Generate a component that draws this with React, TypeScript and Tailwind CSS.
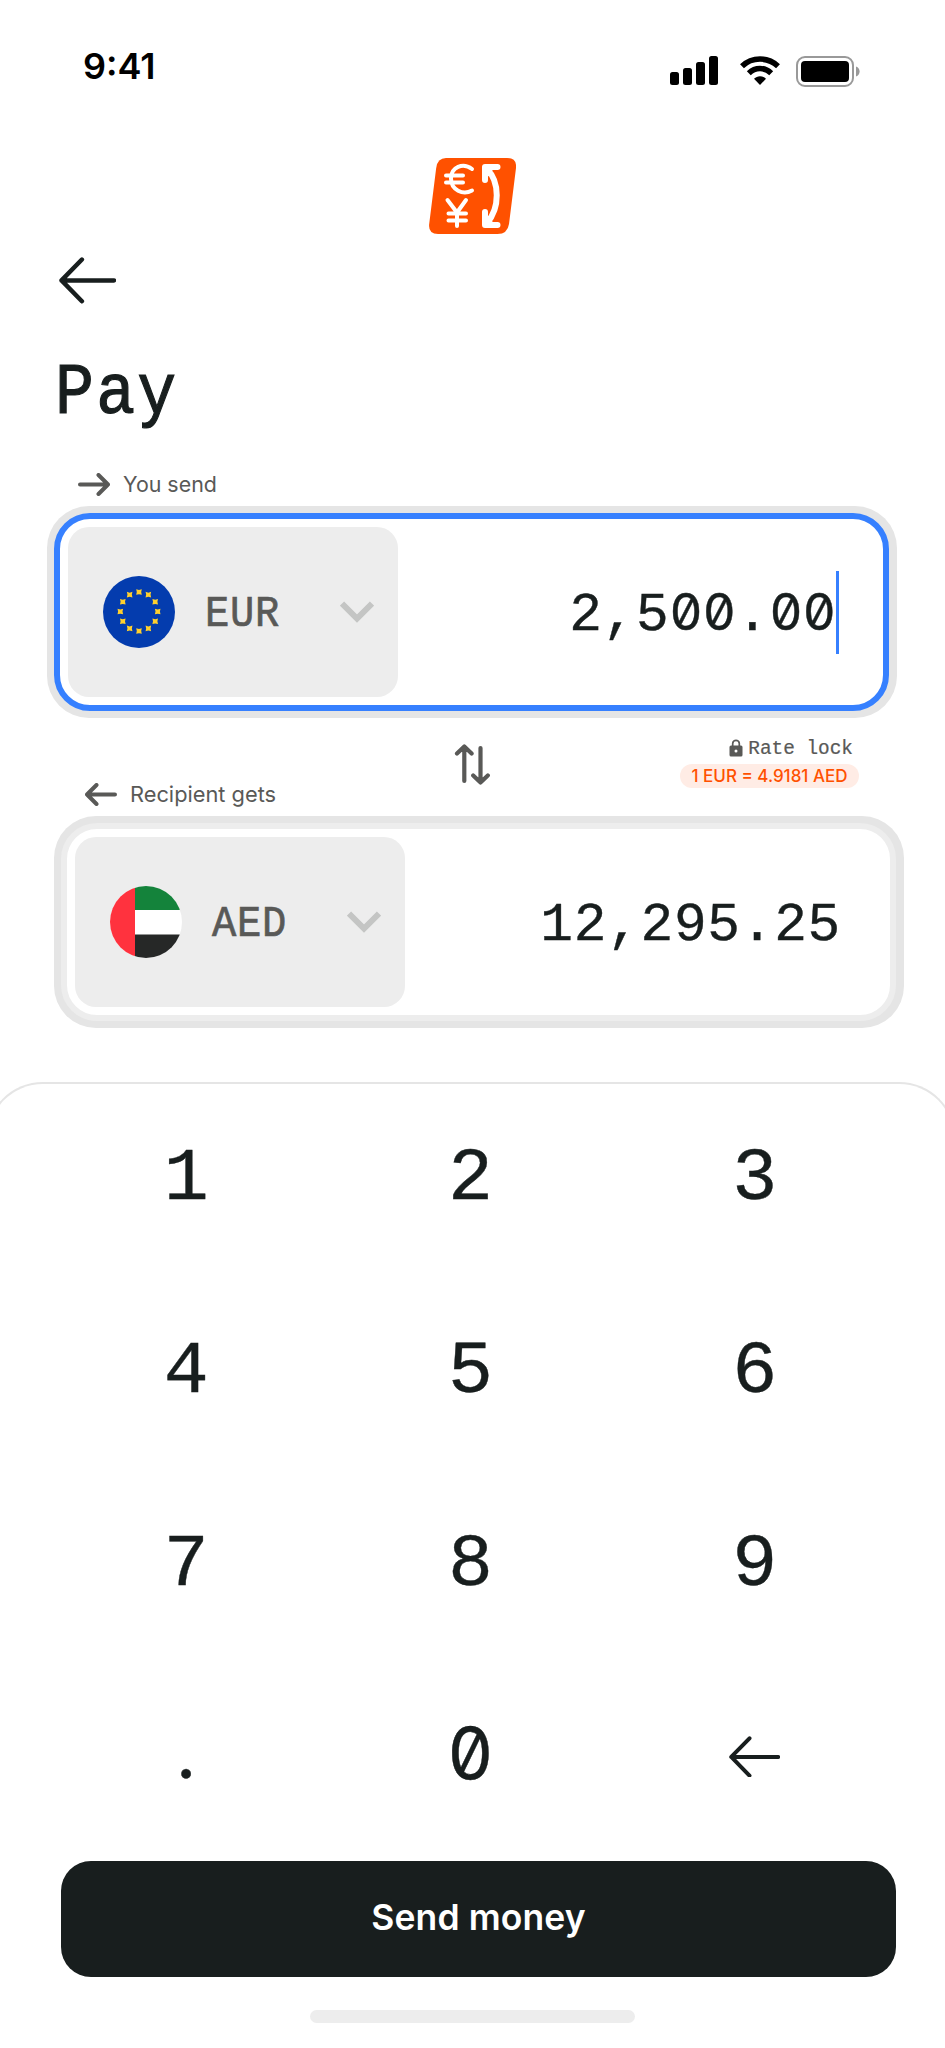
import type { ReactNode } from "react";

const KEYS = ["1", "2", "3", "4", "5", "6", "7", "8", "9", ".", "0", "back"];

function SignalIcon() {
  return (
    <svg width="48" height="29" viewBox="0 0 48 29" fill="#000">
      <rect x="0" y="16" width="9" height="13" rx="2.5" />
      <rect x="13" y="12" width="9" height="17" rx="2.5" />
      <rect x="26" y="6" width="9" height="23" rx="2.5" />
      <rect x="39" y="0" width="9" height="29" rx="2.5" />
    </svg>
  );
}

function WifiIcon() {
  return (
    <svg width="40" height="29" viewBox="0 0 40 29" fill="none" stroke="#000" strokeWidth="5.6">
      <path d="M2 10.2C12 .6 28 .6 38 10.2" />
      <path d="M8.8 17.2C15.2 11 24.8 11 31.2 17.2" />
      <path d="M14 22.8C17.4 19.4 22.6 19.4 26 22.8L20 29Z" fill="#000" stroke="none" />
    </svg>
  );
}

function BatteryIcon() {
  return (
    <svg width="64" height="31" viewBox="0 0 64 31" fill="none">
      <rect x="1" y="1" width="56" height="29" rx="8" stroke="#999" strokeWidth="2" />
      <rect x="5" y="5" width="48" height="21" rx="4" fill="#000" />
      <path d="M60 10.5C64.8 12.2 64.8 18.8 60 20.5Z" fill="#999" />
    </svg>
  );
}

function Logo() {
  return (
    <svg width="87" height="76" viewBox="0 0 87 76" fill="none" stroke="#fff" strokeLinecap="round" strokeLinejoin="round">
      <path d="M17 0H78Q88 0 87 10L80 66Q78.500 76 68.500 76H9Q-1 76 .2 66L7.200 10Q8.500 0 17 0Z" fill="#ff5100" stroke="none" />
      <path d="M43 11C34 4 22 9 22 20.500S34 37.500 43 32.500M17 17.500H34M17 24.500H34" strokeWidth="4" />
      <path d="M18.500 42L28 54.500L37 42M28 54.500V68M19.500 55.500H37M19.500 62.500H37" strokeWidth="4" />
      <path d="M58 11C71 24 71 50 58 65" strokeWidth="6" strokeLinecap="butt" />
      <path d="M56 22V9H68.500M56 54V67H68.500" strokeWidth="6" />
      <path d="M56 9L64 9L60 17L56 18ZM56 67L64 67L60 59L56 58Z" fill="#fff" strokeWidth="2" />
    </svg>
  );
}

function BackArrow({ width }: { width: number }) {
  return (
    <svg width={width} viewBox="0 0 56 46" fill="none" stroke="#181e1e" strokeWidth="4.400" strokeLinecap="round" strokeLinejoin="round">
      <path d="M54 23H2.500M22.500 2.500L2.500 23L22.500 43.500" />
    </svg>
  );
}

function LabelArrow({ flip }: { flip?: boolean }) {
  return (
    <svg width="32" height="23" viewBox="0 0 32 23" fill="none" stroke="#595957" strokeWidth="4" strokeLinecap="round" strokeLinejoin="round" className={flip ? "rotate-180" : ""}>
      <path d="M2 11.500H30M20.500 2L30 11.500L20.500 21" />
    </svg>
  );
}

function SwapIcon() {
  return (
    <svg width="36" height="43" viewBox="0 0 36 43" fill="none" stroke="#595957" strokeWidth="4.200" strokeLinecap="round" strokeLinejoin="round">
      <path d="M10.300 38V3.500M3 10.500L10.300 3.500L17.600 10.500M26.500 5V39.500M19.200 32.500L26.500 39.500L33.800 32.500" />
    </svg>
  );
}

function LockIcon() {
  return (
    <svg width="14" height="18" viewBox="0 0 14 18" fill="none" className="-mt-1">
      <path d="M3.700 8V4.500C3.700 .2 10.300 .2 10.300 4.500V8" stroke="#595957" strokeWidth="1.700" />
      <rect x=".5" y="6.500" width="13" height="11" rx="1.500" fill="#595957" />
      <circle cx="7" cy="12" r="1.500" fill="#fff" />
    </svg>
  );
}

function EuFlag() {
  return (
    <svg width="72" height="72" viewBox="0 0 72 72">
      <circle cx="36" cy="36" r="36" fill="#043cae" />
      {Array.from({ length: 12 }, (_, i) => {
        const a = (i * Math.PI) / 6;
        const x = 36 + 18.7 * Math.sin(a);
        const y = 35.5 - 19.5 * Math.cos(a);
        return (
          <path key={i} transform={`translate(${x} ${y})`} d="M-2.800 -2.800L0 -1.900L2.800 -2.800L2.200 0L2.800 2.800L0 2.200L-2.800 2.800L-2.200 0Z" fill="#ffd02e" />
        );
      })}
    </svg>
  );
}

function UaeFlag() {
  return (
    <svg width="72" height="72" viewBox="0 0 72 72">
      <clipPath id="uae">
        <circle cx="36" cy="36" r="36" />
      </clipPath>
      <g clipPath="url(#uae)">
        <rect width="72" height="72" fill="#fff" />
        <rect x="25" width="47" height="24" fill="#14833b" />
        <rect x="25" y="48.500" width="47" height="24" fill="#262827" />
        <rect width="25" height="72" fill="#ff323e" />
      </g>
    </svg>
  );
}

// Zeros use the slashed glyph, everything else stays monospaced
function Amount({ value }: { value: string }) {
  return (
    <span className="pt-[7px] font-['Liberation_Mono',monospace] text-[54.500px] leading-[84px] tracking-[0.7px] whitespace-nowrap text-[#181e1e] [-webkit-text-stroke:0.4px_#181e1e]">
      {value.split(/(0+)/).map((part, i) =>
        part.startsWith("0") ? (
          <span key={i} className="font-['Inter',sans-serif] text-[51px] leading-none tracking-[0.2px] [font-feature-settings:'zero','tnum']">
            {part}
          </span>
        ) : (
          part
        )
      )}
    </span>
  );
}

function CurrencyPicker({ code, flag }: { code: string; flag: ReactNode }) {
  return (
    <button className="flex h-[170px] w-[330px] shrink-0 items-center rounded-[21px] bg-[#ededed] pr-[24px] pl-[35px]">
      {flag}
      <span className="ml-[30px] origin-left scale-x-90 pt-[5px] font-['Liberation_Mono',monospace] text-[45px] leading-none tracking-[0.8px] text-[#595957] [-webkit-text-stroke:0.7px_#595957]">
        {code}
      </span>
      <svg width="34" height="22" viewBox="0 0 34 22" fill="none" stroke="#c4c5c4" strokeWidth="6" className="ml-auto">
        <path d="M2 2.500L17 17.500L32 2.500" />
      </svg>
    </button>
  );
}

export default function App() {
  return (
    <div className="flex h-[2048px] w-[945px] flex-col overflow-hidden bg-white font-['Inter',sans-serif] text-[#181e1e]">
      <header className="flex h-[158px] items-start justify-between pt-[44px] pr-[85px] pl-[83px]">
        <span className="pt-px text-[36px] leading-[42px] font-semibold text-black">9:41</span>
        <div className="flex items-start pt-3">
          <SignalIcon />
          <span className="ml-[22px]"><WifiIcon /></span>
          <span className="ml-4"><BatteryIcon /></span>
        </div>
      </header>

      <div className="flex h-[76px] justify-center"><Logo /></div>

      <div className="mt-[23px] ml-[59px] h-[46px]"><BackArrow width={57} /></div>

      <h1 className="mt-[46px] ml-[55px] h-[124px] origin-left scale-x-90 font-['Liberation_Mono',monospace] text-[72px] leading-[90px] tracking-[2.500px] [-webkit-text-stroke:1.2px_#181e1e]">
        Pay
      </h1>

      <div className="ml-[78px] flex h-[23px] items-center gap-[13px]">
        <LabelArrow />
        <span className="text-[21.400px] leading-none text-[#595957]">You send</span>
      </div>

      <section className="mt-[10px] ml-[47px] flex h-[212px] w-[850px] rounded-[42px] bg-[#e5e5e5] py-[7px] pr-2 pl-[7px]">
        <div className="flex flex-1 items-center justify-between rounded-[36px] border-6 border-[#3680ff] bg-white pr-[44px] pl-2">
          <CurrencyPicker code="EUR" flag={<EuFlag />} />
          <div className="flex items-center">
            <Amount value="2,500.00" />
            <span className="h-[83px] w-[3px] bg-[#3680ff]" />
          </div>
        </div>
      </section>

      <div className="flex h-[98px] justify-between pr-[86px] pl-[85px]">
        <div className="flex w-[369px] items-center gap-[13px] pt-[55px]">
          <LabelArrow flip />
          <span className="text-[21.800px] leading-none text-[#595957]">Recipient gets</span>
        </div>
        <div className="mt-[25px]"><SwapIcon /></div>
        <div className="ml-auto flex flex-col items-end pt-[17px]">
          <div className="flex h-[24px] items-center gap-[5px] pt-[5px] pr-[6px] text-[#595957]">
            <LockIcon />
            <span className="font-['Liberation_Mono',monospace] text-[19.400px] leading-none [-webkit-text-stroke:0.2px_#595957]">Rate lock</span>
          </div>
          <div className="mt-[5px] flex h-6 w-[179px] items-center justify-center rounded-full bg-[#ffece5] text-[17px] leading-none font-medium text-[#ff5100]">
            1 EUR = 4.9181 AED
          </div>
        </div>
      </div>

      <section className="ml-[54px] flex h-[212px] w-[850px] rounded-[42px] bg-[#e5e5e5] py-[7px] pr-2 pl-[7px]">
        <div className="flex flex-1 items-center justify-between rounded-[36px] border-6 border-[#ededed] bg-white pr-[49px] pl-2">
          <CurrencyPicker code="AED" flag={<UaeFlag />} />
          <Amount value="12,295.25" />
        </div>
      </section>

      <main className="mt-[54px] -ml-[14px] flex h-[966px] w-[970px] flex-col rounded-t-[57px] border-2 border-b-0 border-[#e5e5e5] pl-[12px]">
        <div className="ml-[44px] grid w-[853px] auto-rows-[193px] grid-cols-3">
          {KEYS.map((key) => (
            <button
              key={key}
              className="flex h-[187px] items-center justify-center font-['Liberation_Mono',monospace] text-[75px] leading-none [-webkit-text-stroke:0.4px_#181e1e]"
            >
              {key === "back" ? (
                <BackArrow width={51} />
              ) : key === "0" ? (
                <span className="pb-[7px] font-['Inter',sans-serif] text-[71px] [font-feature-settings:'zero']">0</span>
              ) : key === "." ? (
                <span className="pb-[14px] font-['Lato',sans-serif]">.</span>
              ) : (
                <span className="pt-[3px]">{key}</span>
              )}
            </button>
          ))}
        </div>
        <button className="mt-[5px] ml-[61px] flex h-[116px] w-[835px] items-center justify-center rounded-[30px] bg-[#181e1e] pb-[3px] text-[35.500px] leading-none font-semibold tracking-[0.1px] text-white">
          Send money
        </button>
        <div className="mt-[33px] ml-[310px] h-[13px] w-[325px] rounded-full bg-[#ededed]" />
      </main>
    </div>
  );
}
